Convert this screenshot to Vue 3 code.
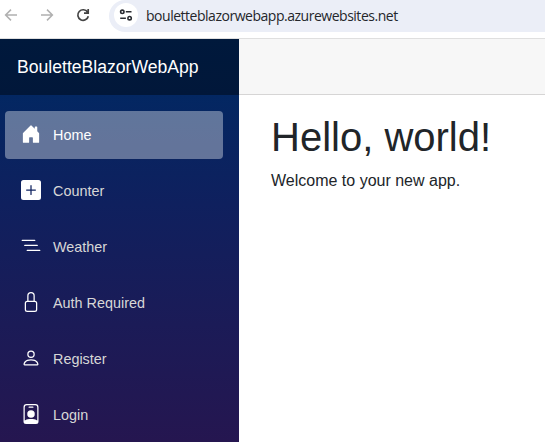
<script setup>
const items = [
  { label: 'Home', active: true, d: 'M6.5 14.5v-3.505c0-.245.25-.495.5-.495h2c.25 0 .5.25.5.5v3.5a.5.5 0 0 0 .5.5h4a.5.5 0 0 0 .5-.5v-7a.5.5 0 0 0-.146-.354L13 5.793V2.5a.5.5 0 0 0-.5-.5h-1a.5.5 0 0 0-.5.5v1.293L8.354 1.146a.5.5 0 0 0-.708 0l-6 6A.5.5 0 0 0 1.5 7.5v7a.5.5 0 0 0 .5.5h4a.5.5 0 0 0 .5-.5Z' },
  { label: 'Counter', d: 'M2 0a2 2 0 0 0-2 2v12a2 2 0 0 0 2 2h12a2 2 0 0 0 2-2V2a2 2 0 0 0-2-2H2zm6.5 4.5v3h3a.5.5 0 0 1 0 1h-3v3a.5.5 0 0 1-1 0v-3h-3a.5.5 0 0 1 0-1h3v-3a.5.5 0 0 1 1 0z' },
  { label: 'Weather', d: 'M4.5 11.5A.5.5 0 0 1 5 11h10a.5.5 0 0 1 0 1H5a.5.5 0 0 1-.5-.5zm-2-4A.5.5 0 0 1 3 7h10a.5.5 0 0 1 0 1H3a.5.5 0 0 1-.5-.5zm-2-4A.5.5 0 0 1 1 3h10a.5.5 0 0 1 0 1H1a.5.5 0 0 1-.5-.5z' },
  { label: 'Auth Required', d: 'M8 1a2 2 0 0 1 2 2v4H6V3a2 2 0 0 1 2-2zm3 6V3a3 3 0 0 0-6 0v4a2 2 0 0 0-2 2v5a2 2 0 0 0 2 2h6a2 2 0 0 0 2-2V9a2 2 0 0 0-2-2zM5 8h6a1 1 0 0 1 1 1v5a1 1 0 0 1-1 1H5a1 1 0 0 1-1-1V9a1 1 0 0 1 1-1z' },
  { label: 'Register', d: 'M8 8a3 3 0 1 0 0-6 3 3 0 0 0 0 6Zm2-3a2 2 0 1 1-4 0 2 2 0 0 1 4 0Zm4 8c0 1-1 1-1 1H3s-1 0-1-1 1-4 6-4 6 3 6 4Zm-1-.004c-.001-.246-.154-.986-.832-1.664C11.516 10.68 10.289 10 8 10c-2.29 0-3.516.68-4.168 1.332-.678.678-.83 1.418-.832 1.664h10Z' },
  { label: 'Login', d: 'M6.5 2a.5.5 0 0 0 0 1h3a.5.5 0 0 0 0-1zM11 8a3 3 0 1 1-6 0 3 3 0 0 1 6 0M4.5 0A2.5 2.5 0 0 0 2 2.5V14a2 2 0 0 0 2 2h8a2 2 0 0 0 2-2V2.5A2.5 2.5 0 0 0 11.5 0zM3 2.5A1.5 1.5 0 0 1 4.5 1h7A1.5 1.5 0 0 1 13 2.5v10.795a4.2 4.2 0 0 0-.776-.492C11.392 12.387 10.063 12 8 12s-3.392.387-4.224.803a4.2 4.2 0 0 0-.776.492z' },
]
</script>

<template>
  <div class="window">
    <header class="toolbar">
      <div class="buttons">
        <svg class="dim" width="14" height="14" viewBox="0 0 14 14"><path d="M13 7H2M7 1.6 1.6 7 7 12.4" /></svg>
        <svg class="dim" width="14" height="14" viewBox="0 0 14 14"><path d="M1 7h11M7 1.6 12.4 7 7 12.4" /></svg>
        <svg class="reload" width="14" height="14" viewBox="0 0 14 14"><path d="M11.6 4.2A5.3 5.3 0 1 0 12.3 8.2M12.2 1v4.2H8" /></svg>
      </div>
      <div class="address">
        <span class="site">
          <svg width="14" height="14" viewBox="0 0 14 14">
            <circle cx="3.3" cy="3.8" r="1.7" /><path d="M6.8 3.8h5.7M1.2 10.2h5.7" /><circle cx="10.6" cy="10.2" r="1.7" />
          </svg>
        </span>
        <span class="url">bouletteblazorwebapp.azurewebsites.net</span>
      </div>
    </header>
    <div class="page">
      <aside class="sidebar">
        <div class="brand">BouletteBlazorWebApp</div>
        <nav>
          <a v-for="item in items" :key="item.label" class="link" :class="{ active: item.active }">
            <svg width="20" height="20" viewBox="0 0 16 16"><path :d="item.d" /></svg>
            <span>{{ item.label }}</span>
          </a>
        </nav>
      </aside>
      <main>
        <div class="top-row"></div>
        <article>
          <h1>Hello, world!</h1>
          <p>Welcome to your new app.</p>
        </article>
      </main>
    </div>
  </div>
</template>

<style>
body { margin: 0; overflow: hidden; }
</style>

<style scoped>
.window {
  height: 442px;
  display: flex;
  flex-direction: column;
  overflow: hidden;
  background: #fff;
  color: #212529;
  font-family: "Liberation Sans", Arial, sans-serif;
}
.toolbar {
  box-sizing: border-box;
  height: 39px;
  flex: none;
  display: flex;
  align-items: flex-start;
  border-bottom: 1px solid #dfdfdf;
}
.buttons {
  width: 109px;
  height: 30px;
  box-sizing: border-box;
  padding-left: 4px;
  display: flex;
  align-items: center;
  gap: 22px;
  flex: none;
}
.buttons svg, .site svg { fill: none; stroke-width: 1.5; }
.dim { stroke: #b0b0b0; }
.buttons .reload { stroke: #444; stroke-width: 1.7; }
.address {
  flex: 1;
  height: 32px;
  margin-right: -20px;
  box-sizing: border-box;
  padding-left: 5px;
  display: flex;
  align-items: center;
  gap: 8px;
  background: #ebeef7;
  border-radius: 16px 0 0 16px;
}
.site {
  width: 24px;
  height: 24px;
  margin-top: -2px;
  border-radius: 50%;
  background: #fff;
  display: flex;
  align-items: center;
  justify-content: center;
}
.site svg { stroke: #2b2d33; stroke-width: 1.6; }
.url {
  font: 14px/20px "Open Sans", "Noto Sans", sans-serif;
  letter-spacing: -0.48px;
  color: #24262b;
  margin-top: -1px;
  white-space: nowrap;
}
.page { display: flex; flex: 1; min-height: 0; }
.sidebar {
  width: 239px;
  flex: none;
  background: linear-gradient(180deg, #002a64 0, #032762 56px, #0f205e 165px, #1b1b57 285px, #251650 403px);
}
.brand {
  height: 56px;
  box-sizing: border-box;
  padding-left: 17px;
  line-height: 56px;
  font-size: 17.6px;
  color: #fff;
  background: rgba(0, 0, 0, .4);
}
nav {
  padding: 16px 16px 0 5px;
  display: flex;
  flex-direction: column;
  gap: 8px;
}
.link {
  height: 48px;
  flex: none;
  box-sizing: border-box;
  padding-left: 16px;
  display: flex;
  align-items: center;
  gap: 12px;
  border-radius: 4px;
  font-size: 14.4px;
  color: #d7d7d7;
}
.link svg { fill: #fff; margin-top: -2px; }
.active { background: rgba(255, 255, 255, .37); color: #fff; }
main { flex: 1; }
.top-row {
  box-sizing: border-box;
  height: 56px;
  background: #f7f7f7;
  border-bottom: 1px solid #d6d5d5;
}
article { padding: 17.6px 24px 0 32px; }
h1 { margin: 0 0 8px; font-size: 40px; line-height: 48px; font-weight: 400; }
p { margin: 0; font-size: 16px; line-height: 24px; }
</style>
